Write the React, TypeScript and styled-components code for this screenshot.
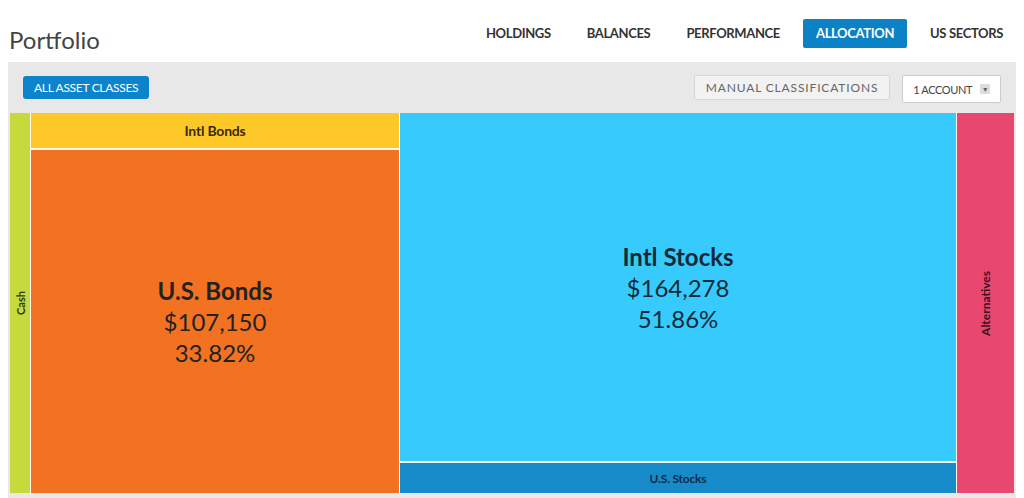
import React from 'react';
import styled, { createGlobalStyle } from 'styled-components';

const GlobalStyle = createGlobalStyle`
  body {
    margin: 0;
    background: #fff;
    font-family: Lato, "Open Sans", "Liberation Sans", sans-serif;
    color: #333;
  }
`;

const Page = styled.div`
  width: 1024px;
  height: 498px;
  overflow: hidden;
`;

const Header = styled.header`
  display: flex;
  justify-content: space-between;
  align-items: flex-start;
  height: 62px;
  box-sizing: border-box;
  padding: 19px 8px 0 9px;
`;

const Title = styled.h1`
  margin: 5px 0 0;
  font-size: 24px;
  line-height: 31px;
  font-weight: 400;
  color: #444;
`;

const Nav = styled.nav`
  display: flex;
  gap: 10px;
`;

const NavItem = styled.a<{ $active?: boolean }>`
  display: block;
  padding: 0 13px;
  height: 29px;
  line-height: 29px;
  font-size: 13px;
  font-weight: 700;
  letter-spacing: -0.35px;
  color: ${({ $active }) => ($active ? '#fff' : '#333')};
  background: ${({ $active }) => ($active ? '#0b82c6' : 'transparent')};
  border-radius: 2px;
`;

const Panel = styled.section`
  margin: 0 8px;
  background: #e8e8e8;
  padding: 0 2px 8px;
`;

const Toolbar = styled.div`
  display: flex;
  align-items: center;
  height: 51px;
  padding: 0 13px;
  gap: 12px;
`;

const PrimaryButton = styled.button`
  height: 23px;
  padding: 0 11px;
  margin-right: auto;
  border: none;
  border-radius: 3px;
  background: #0b84cc;
  color: #fff;
  font-family: inherit;
  font-size: 12px;
  letter-spacing: -0.3px;
`;

const GhostButton = styled.button`
  height: 25px;
  padding: 0 11px;
  border: 1px solid #d6d6d6;
  border-radius: 2px;
  background: #f2f2f2;
  color: #666;
  font-family: inherit;
  font-size: 12px;
  letter-spacing: 0.85px;
`;

const Select = styled.div`
  display: flex;
  align-items: center;
  gap: 8px;
  height: 28px;
  box-sizing: border-box;
  padding: 0 10px;
  border: 1px solid #ccc;
  border-radius: 2px;
  background: #fff;
  font-size: 11px;
  letter-spacing: -0.4px;
  color: #444;
  margin-top: 3px;
`;

const Caret = styled.span`
  display: flex;
  align-items: center;
  justify-content: center;
  width: 10px;
  height: 10px;
  background: #ddd;
  color: #666;
  font-size: 7px;
`;

const Treemap = styled.div`
  display: grid;
  grid-template-columns: 20px 368px 556px 57px;
  gap: 1px;
  height: 380px;
  background: #fbfbf3;
`;

const Column = styled.div`
  display: flex;
  flex-direction: column;
  gap: 2px;
`;

const Tile = styled.div<{ $bg: string; $h?: number; $fg?: string }>`
  display: flex;
  flex-direction: column;
  align-items: center;
  justify-content: center;
  background: ${({ $bg }) => $bg};
  color: ${({ $fg }) => $fg || '#222'};
  ${({ $h }) => ($h ? `height: ${$h}px; flex: none;` : 'flex: 1;')}
`;

const SmallLabel = styled.span<{ $size: number }>`
  font-size: ${({ $size }) => $size}px;
  font-weight: 700;
  letter-spacing: -0.2px;
`;

const VerticalLabel = styled.span<{ $size: number }>`
  writing-mode: vertical-rl;
  transform: rotate(180deg);
  font-size: ${({ $size }) => $size}px;
  font-weight: 700;
`;

const BigName = styled.div`
  font-size: 24px;
  line-height: 31px;
  font-weight: 700;
`;

const BigValue = styled.div`
  font-size: 24px;
  line-height: 31px;
`;

export default function App() {
  return (
    <Page>
      <GlobalStyle />
      <Header>
        <Title>Portfolio</Title>
        <Nav>
          <NavItem>HOLDINGS</NavItem>
          <NavItem>BALANCES</NavItem>
          <NavItem>PERFORMANCE</NavItem>
          <NavItem $active>ALLOCATION</NavItem>
          <NavItem>US SECTORS</NavItem>
        </Nav>
      </Header>
      <Panel>
        <Toolbar>
          <PrimaryButton>ALL ASSET CLASSES</PrimaryButton>
          <GhostButton>MANUAL CLASSIFICATIONS</GhostButton>
          <Select>
            1 ACCOUNT
            <Caret>▼</Caret>
          </Select>
        </Toolbar>
        <Treemap>
          <Tile $bg="#c6da3d" $fg="#2c3a10">
            <VerticalLabel $size={11}>Cash</VerticalLabel>
          </Tile>
          <Column>
            <Tile $bg="#fdc828" $h={35} $fg="#3a2a0c">
              <SmallLabel $size={14}>Intl Bonds</SmallLabel>
            </Tile>
            <Tile $bg="#f37221">
              <BigName>U.S. Bonds</BigName>
              <BigValue>$107,150</BigValue>
              <BigValue>33.82%</BigValue>
            </Tile>
          </Column>
          <Column>
            <Tile $bg="#37cbfd" $fg="#142a38">
              <BigName>Intl Stocks</BigName>
              <BigValue>$164,278</BigValue>
              <BigValue>51.86%</BigValue>
            </Tile>
            <Tile $bg="#178bca" $h={30} $fg="#0d2c44">
              <SmallLabel $size={12}>U.S. Stocks</SmallLabel>
            </Tile>
          </Column>
          <Tile $bg="#e8486f" $fg="#3a1020">
            <VerticalLabel $size={12}>Alternatives</VerticalLabel>
          </Tile>
        </Treemap>
      </Panel>
    </Page>
  );
}
